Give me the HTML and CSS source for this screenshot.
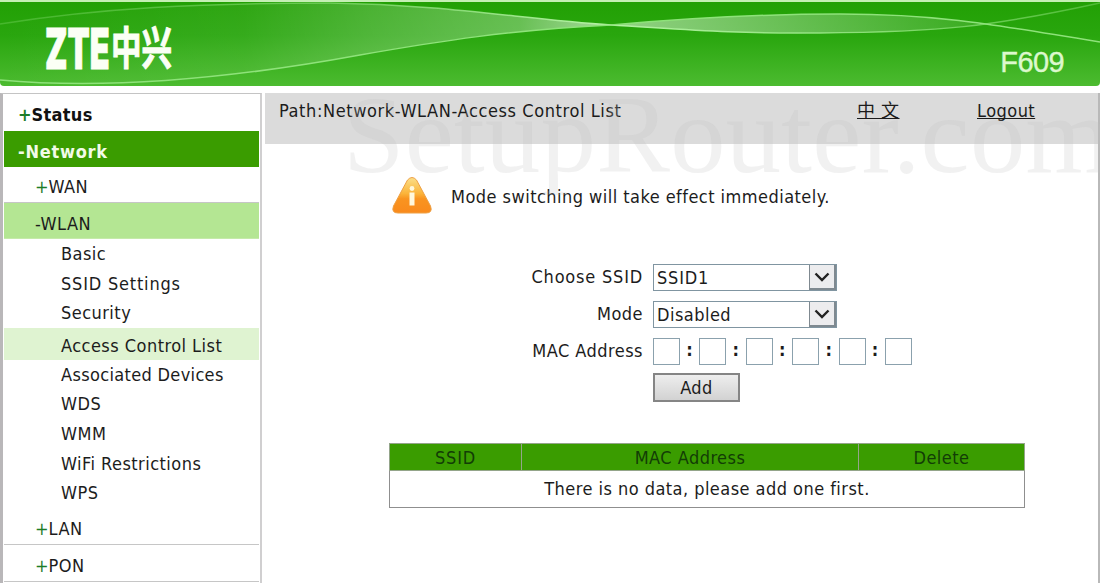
FILE: index.html
```html
<!DOCTYPE html>
<html lang="en">
<head>
    <meta charset="UTF-8">
    <meta name="viewport" content="width=device-width, initial-scale=1.0">
    <title>F609</title>
    <link rel="stylesheet" href="styles.css">
</head>
<body>
    <div class="banner">
        <svg class="waves" width="1100" height="84" viewBox="0 2 1100 84">
            <defs>
                <linearGradient id="leftFill" x1="0" x2="1" y1="0" y2="0">
                    <stop offset="0" stop-color="#fff" stop-opacity="0"/>
                    <stop offset="0.4" stop-color="#fff" stop-opacity="0.06"/>
                    <stop offset="0.6" stop-color="#fff" stop-opacity="0.18"/>
                    <stop offset="0.85" stop-color="#fff" stop-opacity="0.3"/>
                    <stop offset="1" stop-color="#fff" stop-opacity="0.6"/>
                </linearGradient>
                <linearGradient id="rightFill" x1="0" x2="1" y1="0" y2="0">
                    <stop offset="0" stop-color="#fff" stop-opacity="0.5"/>
                    <stop offset="0.4" stop-color="#fff" stop-opacity="0.33"/>
                    <stop offset="1" stop-color="#fff" stop-opacity="0.08"/>
                </linearGradient>
                <linearGradient id="topLine" gradientUnits="userSpaceOnUse" x1="0" x2="1100" y1="0" y2="0">
                    <stop offset="0" stop-color="#8fe27c" stop-opacity="0.3"/>
                    <stop offset="0.3" stop-color="#8fe27c" stop-opacity="0.6"/>
                    <stop offset="0.55" stop-color="#b5f3a5"/>
                    <stop offset="0.8" stop-color="#8fe27c" stop-opacity="0.9"/>
                    <stop offset="1" stop-color="#8fe27c" stop-opacity="0.4"/>
                </linearGradient>
            </defs>
            <path fill="url(#leftFill)" d="M0 24 C100 8 200 3 330 3 C450 5 520 19 611 25 C510 30 440 41 360 55 C240 77 110 90 0 80 Z"/>
            <path fill="url(#rightFill)" d="M611 25 C690 18 760 14 840 14 C900 14 940 18 990 24 C930 30 880 33 820 33 C730 34 680 29 611 25 Z"/>
            <path class="line" stroke="url(#topLine)" d="M0 24 C100 8 200 3 330 3 C450 5 520 19 611 25 C680 29 730 34 820 33 C940 32 990 27 1100 3"/>
            <path class="line bottom" d="M0 80 C110 90 240 77 360 55 C440 41 510 30 611 25 C690 18 760 14 840 14 C930 14 980 22 1100 42"/>
        </svg>
        <svg class="logo" width="130" height="60" viewBox="0 0 130 60">
            <text class="zte" transform="translate(0 46) scale(0.53 1)" textLength="122" lengthAdjust="spacingAndGlyphs">ZTE</text>
            <text class="cjk" transform="translate(66 42) scale(0.68 1)">中兴</text>
        </svg>
        <div class="model">F609</div>
    </div>

    <div class="page">
        <div class="menu">
            <div class="top"><span class="plus">+</span>Status</div>
            <div class="top open">-Network</div>
            <div class="second"><span class="plus">+</span>WAN</div>
            <div class="second open">-WLAN</div>
            <div class="third">Basic</div>
            <div class="third ssid">SSID Settings</div>
            <div class="third">Security</div>
            <div class="third current">Access Control List</div>
            <div class="third devices">Associated Devices</div>
            <div class="third">WDS</div>
            <div class="third">WMM</div>
            <div class="third">WiFi Restrictions</div>
            <div class="third">WPS</div>
            <div class="second"><span class="plus">+</span>LAN</div>
            <div class="second"><span class="plus">+</span>PON</div>
        </div>

        <div class="main">
            <div class="path">
                <span class="pathText">Path:Network-WLAN-Access Control List</span>
                <a class="lang">中 文</a>
                <a class="logout">Logout</a>
            </div>

            <div class="notice">
                <svg width="42" height="40" viewBox="0 0 42 40">
                    <defs>
                        <linearGradient id="warn" x1="0" x2="0" y1="0" y2="1">
                            <stop offset="0" stop-color="#fbe08a"/>
                            <stop offset="0.45" stop-color="#fbb43a"/>
                            <stop offset="0.6" stop-color="#f99420"/>
                            <stop offset="1" stop-color="#f98a1c"/>
                        </linearGradient>
                    </defs>
                    <path fill="url(#warn)" stroke="#eea044" d="M16.500 4 Q21 -1 25.500 4 L39.500 30 Q42 37 35 37 H7 Q0 37 2.500 30 Z"/>
                    <circle cx="21" cy="12.500" r="2.400" fill="#fff8dc"/>
                    <rect x="18.500" y="16.500" width="5" height="13" fill="#fff8dc"/>
                </svg>
                <span>Mode switching will take effect immediately.</span>
            </div>

            <div class="form">
                <label class="ssid">Choose SSID</label>
                <div class="select ssid">
                    <select><option>SSID1</option></select>
                    <span class="arrow"><svg width="16" height="10" viewBox="0 0 16 10"><path d="M1.500 1.500 L8 8 L14.500 1.500"/></svg></span>
                </div>
                <label>Mode</label>
                <div class="select">
                    <select><option>Disabled</option></select>
                    <span class="arrow"><svg width="16" height="10" viewBox="0 0 16 10"><path d="M1.500 1.500 L8 8 L14.500 1.500"/></svg></span>
                </div>
                <label>MAC Address</label>
                <div class="mac">
                    <input type="text"><b>:</b><input type="text"><b>:</b><input type="text"><b>:</b><input type="text"><b>:</b><input type="text"><b>:</b><input type="text">
                </div>
                <button class="add">Add</button>
            </div>

            <table class="list">
                <tr>
                    <th class="colSsid ssid">SSID</th>
                    <th class="colMac">MAC Address</th>
                    <th class="colDelete">Delete</th>
                </tr>
                <tr>
                    <td colspan="3">There is no data, please add one first.</td>
                </tr>
            </table>
        </div>
    </div>
    <div class="watermark">SetupRouter.com</div>
</body>
</html>
```
FILE: styles.css
```css
body{
    margin: 0;
    height: 583px;
    overflow: hidden;
    position: relative;
    background: #fff;
    color: #1c1c1c;
    font-family: "DejaVu Sans Condensed", "DejaVu Sans", "Noto Sans CJK SC", sans-serif;
    font-stretch: condensed;
    font-size: 18px;
    letter-spacing: 0.46px;
}

.banner{
    display: flex;
    justify-content: space-between;
    box-sizing: border-box;
    height: 86px;
    border-top: 2px solid #c5efb4;
    background: linear-gradient(#22a004, #29a60e 40%, #4cbb30);
    border-radius: 0 0 4px 4px;
    position: relative;
}

.waves{
    position: absolute;
    left: 0;
    top: 0;
}

.line{
    fill: none;
    stroke-width: 1.5;
}

.bottom{
    stroke: #8ee27a;
}

.logo{
    position: relative;
    margin: 21px 0 0 45px;
    letter-spacing: 0;
}

.logo text{
    fill: #fbfff5;
    stroke: #fbfff5;
}

.zte{
    font: 900 57px Inter, "Liberation Sans", sans-serif;
    stroke-width: 1;
}

.cjk{
    font: bold 45px "Noto Sans CJK SC", sans-serif;
    stroke-width: 1;
}

.model{
    position: relative;
    margin: 42px 36px 0 0;
    font: 29px/36px "Liberation Sans", sans-serif;
    letter-spacing: -0.6px;
    color: #dcf8cd;
    -webkit-text-stroke: 0.4px #dcf8cd;
}

.page{
    display: flex;
    margin-top: 7px;
    height: 490px;
}

.menu{
    box-sizing: border-box;
    width: 262px;
    padding: 1px 1px 0 1px;
    border: 1px solid #c4c4c4;
    border-left: 3px solid #b9b7b9;
    border-right: 2px solid #d0cfd0;
    border-bottom: none;
}

.top{
    height: 36px;
    padding-left: 14px;
    font-weight: bold;
    line-height: 40px;
    letter-spacing: 0.3px;
    color: #111;
}

.top.open{
    background: #3a9c00;
    color: #f2fbe8;
    letter-spacing: 0.75px;
    line-height: 41px;
}

.plus{
    color: #1d7d28;
    letter-spacing: 0;
}

.second{
    box-sizing: border-box;
    height: 37px;
    padding-left: 31px;
    border-bottom: 1px solid #c6c6c6;
    line-height: 41px;
}

.top + .second{
    height: 36px;
    line-height: 40px;
}

.second.open{
    height: 36px;
    border-bottom-color: #c5eaaa;
    background: #b4e693;
}

.third{
    height: 29.6px;
    padding-left: 57px;
    line-height: 30px;
}

.third.current{
    height: 32px;
    line-height: 36px;
    background: #dff3d1;
}

.third.devices{
    letter-spacing: 0.33px;
}

.ssid{
    letter-spacing: 0.8px;
}

.main{
    flex: 1;
    margin-left: 3px;
    border-right: 2px solid #b9b9b9;
}

.path{
    display: flex;
    height: 51px;
    padding-left: 14px;
    background: #dbdbdb;
    line-height: 35px;
}

.pathText{
    width: 578px;
    letter-spacing: 0.6px;
}

.lang{
    width: 120px;
    text-decoration: underline;
}

.logout{
    text-decoration: underline;
    text-decoration-skip-ink: none;
}

.notice{
    display: flex;
    align-items: center;
    height: 40px;
    margin: 32px 0 0 126px;
    gap: 18px;
}

.form{
    display: grid;
    grid-template-columns: 378px auto;
    grid-auto-rows: 27px;
    column-gap: 10px;
    row-gap: 10px;
    margin-top: 48px;
    line-height: 27px;
}

.form label{
    line-height: 26px;
    text-align: right;
}

.select{
    display: flex;
    box-sizing: border-box;
    width: 184px;
    height: 27px;
    border: 1px solid #8095a1;
}

.select select{
    flex: 1;
    appearance: none;
    border: none;
    padding: 0 3px 1px;
    background: #fff;
    color: #1c1c1c;
    font: inherit;
    line-height: 21px;
    letter-spacing: inherit;
}

.arrow{
    display: flex;
    align-items: center;
    justify-content: center;
    box-sizing: border-box;
    width: 27px;
    border: 1px solid #7f8990;
    border-width: 0 2px 2px 1px;
    background: #ececee;
}

.arrow path{
    fill: none;
    stroke: #222;
    stroke-width: 2.4;
}

.mac{
    display: flex;
}

.mac input{
    box-sizing: border-box;
    width: 27px;
    height: 27px;
    padding: 0;
    border: 1px solid #8ba1ad;
}

.mac b{
    width: 19.4px;
    font-weight: bold;
    line-height: 23px;
    text-align: center;
}

.add{
    grid-column: 2;
    width: 87px;
    height: 29px;
    margin-top: -2px;
    padding: 0;
    border: 2px solid #858585;
    background: linear-gradient(#eee, #d2d2d2);
    color: #1c1c1c;
    font: inherit;
    line-height: 22px;
    letter-spacing: inherit;
}

.list{
    width: 636px;
    margin: 41px 0 0 124px;
    border-collapse: collapse;
    border: 1.5px solid #8f8f8f;
    text-align: center;
}

.list th{
    height: 26px;
    padding: 0;
    border: 1px solid #94a58a;
    background: #3a9c00;
    color: #123d06;
    font-weight: normal;
}

.colSsid{
    width: 131px;
}

.colDelete{
    width: 165px;
}

.list td{
    height: 35px;
    padding: 0 0 1px;
}

/* site name laid over the whole page */
.watermark{
    position: absolute;
    left: 343px;
    top: 73px;
    font: 110.5px/124px "Liberation Serif", serif;
    letter-spacing: 0.3px;
    color: rgba(190, 190, 190, 0.22);
    white-space: nowrap;
    pointer-events: none;
}
```
